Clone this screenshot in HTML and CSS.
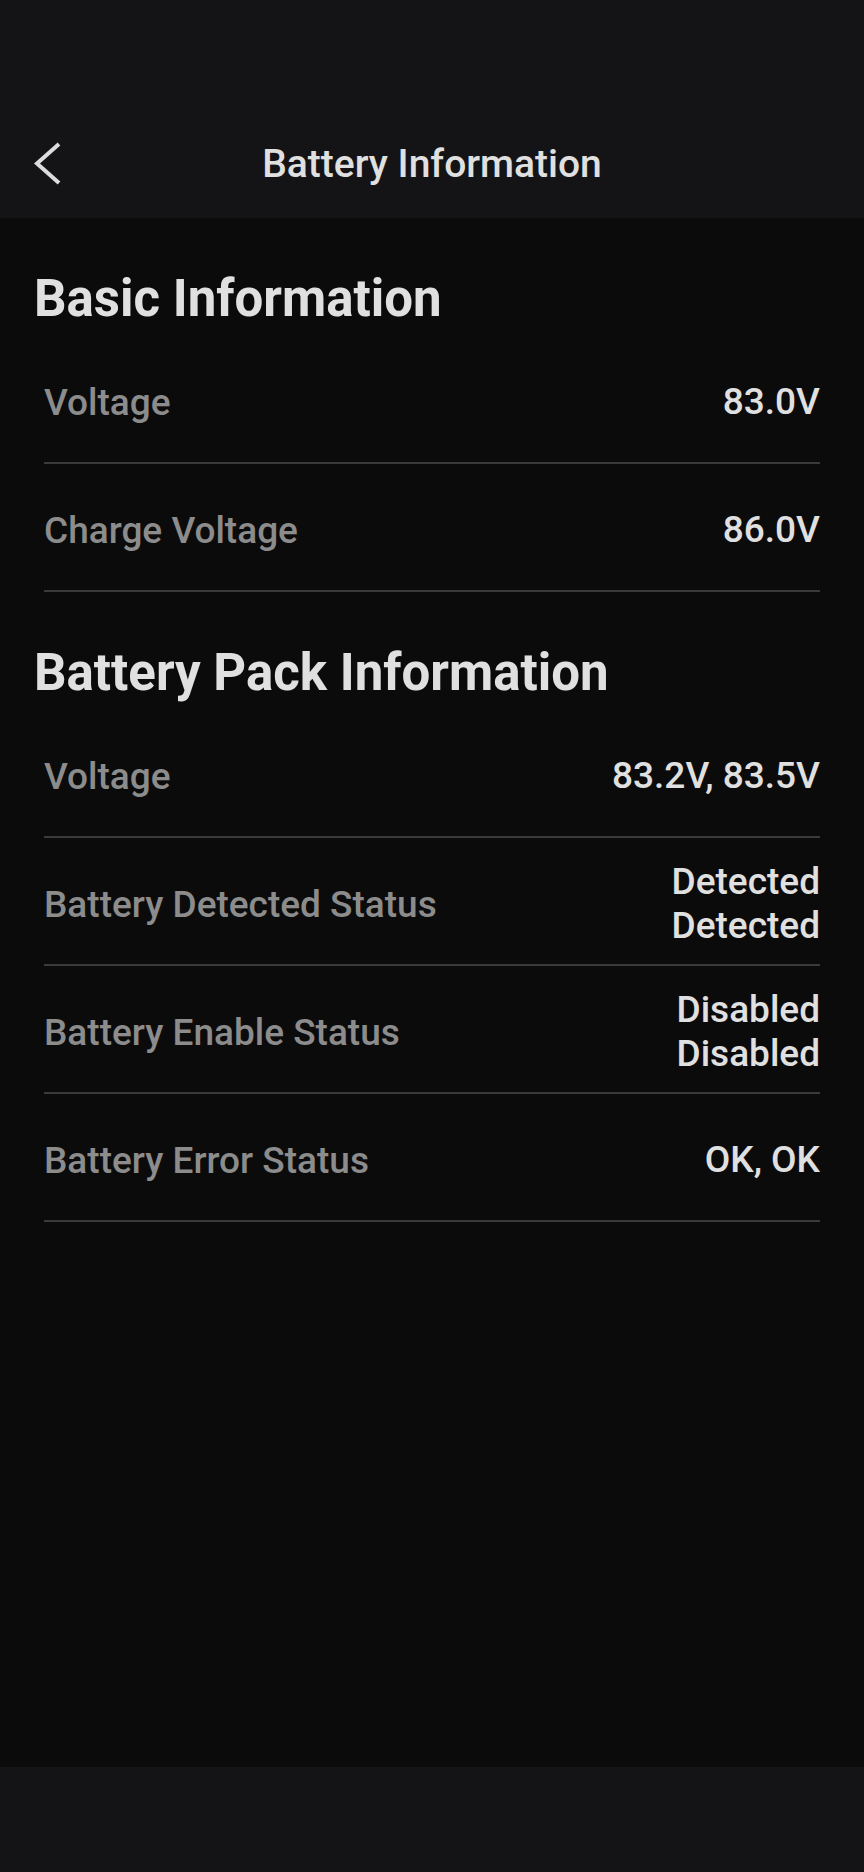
FILE: index.html
```html
<!DOCTYPE html>
<html>
    <head>
        <meta charset='UTF-8'>
        <link rel="stylesheet" href="styles.css">
    </head>
    <body>
        <header class="top">
            <nav class="nav">
                <a class="back" href="#">
                    <svg width="30" height="50" viewBox="0 0 30 50">
                        <polyline points="26,5 4,24.5 26,44" fill="none" stroke="#dcdcdc" stroke-width="4"></polyline>
                    </svg>
                </a>
                <h1 class="title">Battery Information</h1>
                <span></span>
            </nav>
        </header>

        <main class="content">
            <section class="section">
                <h2 class="heading">Basic Information</h2>
                <div class="rows">
                    <div class="row">
                        <span class="label">Voltage</span>
                        <span class="value">83.0V</span>
                    </div>
                    <div class="row">
                        <span class="label">Charge Voltage</span>
                        <span class="value">86.0V</span>
                    </div>
                </div>
            </section>

            <section class="section">
                <h2 class="heading">Battery Pack Information</h2>
                <div class="rows">
                    <div class="row">
                        <span class="label">Voltage</span>
                        <span class="value">83.2V, 83.5V</span>
                    </div>
                    <div class="row">
                        <span class="label">Battery Detected Status</span>
                        <span class="value">Detected<br>Detected</span>
                    </div>
                    <div class="row">
                        <span class="label">Battery Enable Status</span>
                        <span class="value">Disabled<br>Disabled</span>
                    </div>
                    <div class="row">
                        <span class="label">Battery Error Status</span>
                        <span class="value">OK, OK</span>
                    </div>
                </div>
            </section>
        </main>

        <footer class="bottom"></footer>
    </body>
</html>
```

FILE: styles.css
```css
html, body {
    width: 100%;
    height: 100%;
}

body {
    display: flex;
    flex-direction: column;
    margin: 0;
    padding: 0;
    background-color: #0b0b0b;
    font-family: Roboto, 'Noto Sans', sans-serif;
    -webkit-font-smoothing: antialiased;
}

.top {
    padding-top: 110px;
    background-color: #141416;
}

.nav {
    display: grid;
    grid-template-columns: 1fr auto 1fr;
    align-items: center;
    height: 108px;
}

.back {
    display: flex;
    align-items: center;
    padding-left: 33px;
}

.title {
    margin: 0;
    font-size: 39px;
    font-weight: 500;
    color: #e0e0e0;
}

.content {
    flex: 1;
}

.section {
    padding: 0 44px 0 34px;
}

.heading {
    margin: 53px 0 9px;
    font-size: 51px;
    line-height: 56px;
    font-weight: 700;
    color: #e0e0e0;
}

.rows {
    margin-left: 10px;
}

.row {
    display: flex;
    justify-content: space-between;
    align-items: center;
    box-sizing: border-box;
    min-height: 128px;
    padding-top: 6px;
    border-bottom: 2px solid #3a3a3c;
}

.label {
    font-size: 37px;
    font-weight: 500;
    color: #8c8c8c;
}

.value {
    font-size: 37px;
    line-height: 44px;
    font-weight: 500;
    color: #e0e0e0;
    text-align: right;
}

.bottom {
    height: 105px;
    background-color: #141416;
}
```
